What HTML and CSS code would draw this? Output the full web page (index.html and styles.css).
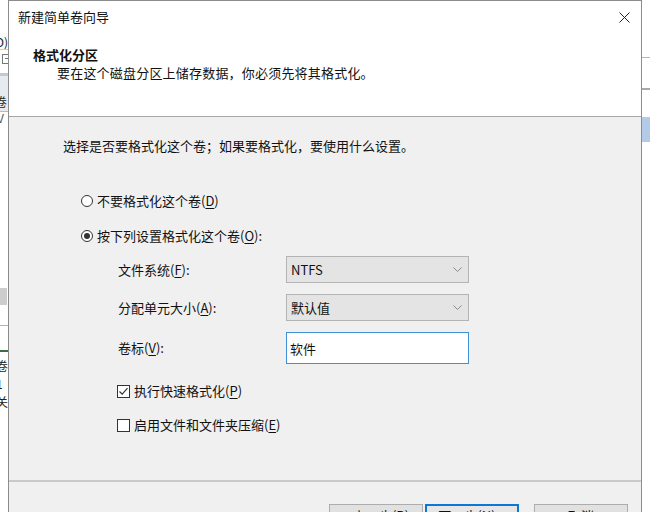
FILE: index.html
```html
<!DOCTYPE html>
<html lang="zh-CN">
<head>
  <meta charset="UTF-8" />
  <title>新建简单卷向导</title>
  <link rel="stylesheet" href="styles.css">
</head>
<body>
  <!-- window behind the wizard -->
  <div class="desk">
    <div class="bg-left">
      <div class="bg-gap" style="height: 33px"></div>
      <div class="bg-text bg-row">(D)</div>
      <div class="bg-icon-row"><span class="bg-icon"></span></div>
      <div class="bg-band"><span class="bg-text">卷</span></div>
      <div class="bg-text bg-v">V</div>
      <div class="bg-gap" style="height: 166px"></div>
      <div class="bg-block"></div>
      <div class="bg-gap" style="height: 20px"></div>
      <div class="bg-line"></div>
      <div class="bg-gap" style="height: 24px"></div>
      <div class="bg-green"></div>
      <div class="bg-text bg-small">卷</div>
      <div class="bg-text bg-small">1</div>
      <div class="bg-text bg-small">关</div>
    </div>
    <div class="bg-mid"></div>
    <div class="bg-right">
      <div class="bg-gap" style="height: 57px"></div>
      <div class="bg-line"></div>
      <div class="bg-gap" style="height: 30px"></div>
      <div class="bg-line thick"></div>
      <div class="bg-gap" style="height: 27px"></div>
      <div class="bg-sel"></div>
    </div>
  </div>

  <div class="dialog">
    <div class="header">
      <div class="titlebar">
        <span class="title">新建简单卷向导</span>
        <span class="close">
          <svg width="11" height="11" viewBox="0 0 11 11">
            <path d="M0.5 0.5 L10.5 10.5 M10.5 0.5 L0.5 10.5" stroke="#222" stroke-width="1" fill="none"/>
          </svg>
        </span>
      </div>
      <div class="heading">格式化分区</div>
      <div class="subheading">要在这个磁盘分区上储存数据，你必须先将其格式化。</div>
    </div>

    <div class="content">
      <p class="intro">选择是否要格式化这个卷；如果要格式化，要使用什么设置。</p>

      <div class="radios">
        <div class="radio-row">
          <svg class="radio" width="12" height="12" viewBox="0 0 12 12">
            <circle cx="6" cy="6" r="5.5" fill="#fff" stroke="#333"/>
          </svg>
          <span>不要格式化这个卷(<u>D</u>)</span>
        </div>
        <div class="radio-row">
          <svg class="radio" width="12" height="12" viewBox="0 0 12 12">
            <circle cx="6" cy="6" r="5.5" fill="#fff" stroke="#333"/>
            <circle cx="6" cy="6" r="3" fill="#333"/>
          </svg>
          <span>按下列设置格式化这个卷(<u>O</u>):</span>
        </div>
      </div>

      <div class="fields">
        <span class="label">文件系统(<u>F</u>):</span>
        <div class="combo">
          <span>NTFS</span>
          <svg width="9" height="5" viewBox="0 0 9 5"><polyline points="0.5,0.5 4.5,4.5 8.5,0.5" fill="none" stroke="#8a8a8a"/></svg>
        </div>
        <span class="label">分配单元大小(<u>A</u>):</span>
        <div class="combo">
          <span>默认值</span>
          <svg width="9" height="5" viewBox="0 0 9 5"><polyline points="0.5,0.5 4.5,4.5 8.5,0.5" fill="none" stroke="#8a8a8a"/></svg>
        </div>
        <span class="label">卷标(<u>V</u>):</span>
        <div class="textbox">软件</div>
      </div>

      <div class="checks">
        <div class="check-row">
          <svg width="13" height="13" viewBox="0 0 13 13">
            <rect x="0.5" y="0.5" width="12" height="12" fill="#fff" stroke="#333"/>
            <polyline points="2.5,6.5 5.2,9.2 10.5,3.2" fill="none" stroke="#333" stroke-width="1.2"/>
          </svg>
          <span>执行快速格式化(<u>P</u>)</span>
        </div>
        <div class="check-row">
          <svg width="13" height="13" viewBox="0 0 13 13">
            <rect x="0.5" y="0.5" width="12" height="12" fill="#fff" stroke="#333"/>
          </svg>
          <span>启用文件和文件夹压缩(<u>E</u>)</span>
        </div>
      </div>
    </div>

    <div class="footer">
      <button class="btn back">&lt; 上一步(<u>B</u>)</button>
      <button class="btn next focused">下一步(<u>N</u>) &gt;</button>
      <button class="btn">取消</button>
    </div>
  </div>
</body>
</html>
```

FILE: styles.css
```css
* {
  box-sizing: border-box;
}

body {
  margin: 0;
  width: 650px;
  height: 512px;
  overflow: hidden;
  position: relative;
  background-color: #fff;
  font-family: "Noto Sans CJK SC", "Microsoft YaHei", sans-serif;
  font-size: 13px;
  color: #111;
}

u {
  text-decoration-thickness: 1px;
  text-underline-offset: 2px;
}

/* background window */
.desk {
  display: flex;
  height: 512px;
}

.bg-left,
.bg-right {
  width: 8px;
  display: flex;
  flex-direction: column;
  overflow: hidden;
}

.bg-mid {
  flex: 1;
}

.bg-text {
  font-size: 12px;
  line-height: 17px;
  white-space: nowrap;
  color: #222;
}

.bg-row {
  height: 17px;
  background-color: #fafafa;
  border-bottom: 1px solid #cfcfcf;
  direction: rtl;
  text-align: left;
}

.bg-icon-row {
  height: 26px;
  padding: 4px 0 0 2px;
  border-bottom: 3px solid #c8c8c8;
}

.bg-icon {
  display: block;
  width: 10px;
  height: 10px;
  border: 1px solid #777;
  background: linear-gradient(#777, #777) 2px 3px / 6px 1px no-repeat;
}

.bg-band {
  height: 36px;
  background-color: #e6ebf1;
  border-bottom: 1px solid #b9b9b9;
  padding-top: 16px;
  margin-left: -5px;
}

.bg-v {
  height: 10px;
  line-height: 12px;
  margin-left: -3px;
  color: #555;
}

.bg-block {
  height: 17px;
  width: 7px;
  background-color: #cdcdcd;
}

.bg-line {
  height: 1px;
  background-color: #b5b5b5;
}

.bg-line.thick {
  height: 2px;
  background-color: #a9a9a9;
}

.bg-green {
  height: 2px;
  background-color: #3d6b4a;
  margin-bottom: 5px;
}

.bg-small {
  height: 18px;
  margin-left: -4px;
}

.bg-sel {
  height: 25px;
  background-color: #b3cbe6;
}

/* wizard dialog */
.dialog {
  position: absolute;
  left: 8px;
  top: 0;
  width: 634px;
  height: 540px;
  border: 1px solid #8c8c8c;
  background-color: #f0f0f0;
}

.header {
  height: 116px;
  background-color: #fff;
  border-bottom: 1px solid #a6a6a6;
}

.titlebar {
  height: 34px;
  display: flex;
  align-items: center;
  justify-content: space-between;
  padding: 0 11px 2px 9px;
}

.title {
  line-height: 18px;
}

.close svg {
  display: block;
}

.heading {
  margin-top: 11px;
  padding-left: 24px;
  line-height: 18px;
  font-weight: bold;
}

.subheading {
  padding-left: 48px;
  line-height: 18px;
  letter-spacing: 0.2px;
}

.content {
  height: 365px;
  padding-top: 20px;
  border-bottom: 2px solid #c9c9c9;
}

.intro {
  margin: 0 0 0 54px;
  line-height: 18px;
}

.radios {
  margin: 37px 0 0 72px;
  display: flex;
  flex-direction: column;
  gap: 17px;
}

.radio-row,
.check-row {
  height: 18px;
  display: flex;
  align-items: center;
  gap: 4px;
  line-height: 18px;
}

.radio-row svg,
.check-row svg {
  display: block;
  flex-shrink: 0;
}

.fields {
  margin: 11px 0 0 109px;
  display: grid;
  grid-template-columns: 168px 183px;
  grid-template-rows: 27px 27px 32px;
  row-gap: 11px;
  align-items: center;
}

.label {
  line-height: 18px;
}

.combo {
  height: 27px;
  display: flex;
  align-items: center;
  justify-content: space-between;
  padding: 0 6px 0 4px;
  background-color: #e4e4e4;
  border: 1px solid #b4b4b4;
}

.combo svg {
  display: block;
}

.textbox {
  height: 32px;
  display: flex;
  align-items: center;
  padding-left: 3px;
  background-color: #fff;
  border: 1px solid #3f8fd6;
}

.checks {
  margin: 18px 0 0 108px;
  display: flex;
  flex-direction: column;
  gap: 16px;
}

.footer {
  display: flex;
  justify-content: flex-end;
  padding: 22px 13px 0 0;
}

.btn {
  width: 94px;
  height: 23px;
  padding: 0;
  font-family: inherit;
  font-size: 13px;
  line-height: 18px;
  color: #111;
  background-color: #e1e1e1;
  border: 1px solid #adadad;
}

.btn.back {
  margin-right: 2px;
}

.btn.next {
  margin-right: 15px;
}

.btn.focused {
  border: 2px solid #0a78d4;
  background-color: #e6e6e6;
}
```
